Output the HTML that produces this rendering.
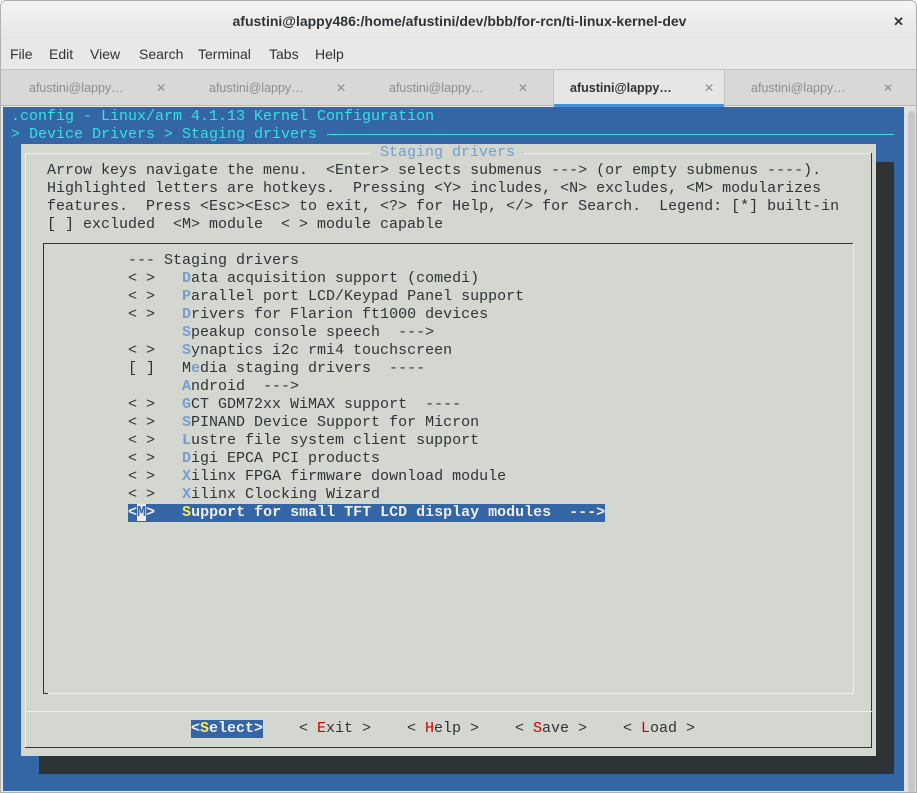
<!DOCTYPE html>
<html><head><meta charset="utf-8"><style>
*{margin:0;padding:0;box-sizing:border-box}
body{width:917px;height:793px;overflow:hidden;background:#fff;font-family:"Liberation Sans",sans-serif;position:relative}
.win{position:absolute;left:0;top:0;width:917px;height:793px;border:1px solid #b0b0b0;border-radius:6px 6px 0 0;background:#e8e8e7;overflow:hidden}
.title{position:absolute;left:0;top:0;width:917px;height:38px;background:linear-gradient(#f4f4f3,#e6e6e5);text-align:center;font-weight:bold;font-size:14px;color:#2e3436;line-height:40px}
.close{position:absolute;right:14px;top:1px;font-size:13px;font-weight:bold;color:#2e3436}
.menu{position:absolute;top:38px;left:0;width:917px;height:30px;background:#e8e8e7;font-size:14px;color:#2e3436}
.menu span{position:absolute;top:7px}
.tabs{position:absolute;top:68px;left:0;width:917px;height:37px;background:#d8d8d7;border-top:1px solid #c4c4c4;border-bottom:1px solid #b8b8b8}
.tab{position:absolute;top:0;height:36px;font-size:12.5px;color:#8d8f8f;line-height:36px}
.tab .x{position:absolute;font-size:12px}
.act{background:#e6e6e5;border-left:1px solid #c4c4c4;border-right:1px solid #c4c4c4;color:#2e3436;font-weight:bold}
.act:after{content:"";position:absolute;left:0;right:0;bottom:-1px;height:3px;background:#4a90d9}
.term{position:absolute;left:2px;top:106px;width:901px;height:684px;background:#3465a4}
.sb{position:absolute;left:903px;top:106px;width:14px;height:687px;background:#e0e0df}
.sb div{position:absolute;left:4px;top:4px;width:7px;height:682px;background:#c8c8c8;border-radius:4px}
.t{position:absolute;font-family:"Liberation Mono",monospace;font-size:15px;line-height:18px;height:18px;white-space:pre;color:#2e3436;margin-left:-1px}
.c{color:#34e2e2}
.h{color:#729fcf;font-weight:bold}
.r{color:#cc0000}
.y{color:#fce94f}
.abs{position:absolute}
</style></head><body><div class="win">
<div class="title">afustini@lappy486:/home/afustini/dev/bbb/for-rcn/ti-linux-kernel-dev<span class="close">✕</span></div>
<div class="menu"><span style="left:9px">File</span><span style="left:48px">Edit</span><span style="left:89px">View</span><span style="left:138px">Search</span><span style="left:197px">Terminal</span><span style="left:268px">Tabs</span><span style="left:314px">Help</span></div>
<div class="tabs">
<div class="tab" style="left:0;width:182px"><span style="position:absolute;left:28px">afustini@lappy…</span><span class="x" style="left:155px">✕</span></div>
<div class="tab" style="left:182px;width:182px"><span style="position:absolute;left:26px">afustini@lappy…</span><span class="x" style="left:153px">✕</span></div>
<div class="tab" style="left:364px;width:188px"><span style="position:absolute;left:24px">afustini@lappy…</span><span class="x" style="left:153px">✕</span></div>
<div class="tab act" style="left:552px;width:172px"><span style="position:absolute;left:16px">afustini@lappy…</span><span class="x" style="left:150px;font-weight:normal;color:#8d8f8f">✕</span></div>
<div class="tab" style="left:724px;width:193px"><span style="position:absolute;left:26px">afustini@lappy…</span><span class="x" style="left:158px">✕</span></div>
</div>
<div class="sb"><div></div></div>
<div class="term"></div>
<div class="t c" style="left:11px;top:107px">.config - Linux/arm 4.1.13 Kernel Configuration</div>
<div class="t c" style="left:11px;top:125px">&gt; Device Drivers &gt; Staging drivers</div>
<div class="abs" style="left:326px;top:133px;width:567px;height:1px;background:#34e2e2"></div>
<div class="abs" style="left:38px;top:755px;width:855px;height:18px;background:#2e3436"></div>
<div class="abs" style="left:875px;top:161px;width:18px;height:612px;background:#2e3436"></div>
<div class="abs" style="left:20px;top:143px;width:855px;height:612px;background:#d3d7cf"></div>
<div class="abs" style="left:24px;top:152px;width:847px;height:1px;background:#eeeeec"></div>
<div class="abs" style="left:24px;top:152px;width:1px;height:594px;background:#eeeeec"></div>
<div class="abs" style="left:870px;top:152px;width:1px;height:594px;background:#2e3436"></div>
<div class="abs" style="left:24px;top:746px;width:847px;height:1px;background:#2e3436"></div>
<div class="abs" style="left:24px;top:710px;width:847px;height:1px;background:#eeeeec"></div>
<div class="t h" style="left:371px;top:143px;background:#d3d7cf;font-weight:normal"> Staging drivers </div>
<div class="t" style="left:38px;top:161px"> Arrow keys navigate the menu.  &lt;Enter&gt; selects submenus ---&gt; (or empty submenus ----).</div>
<div class="t" style="left:38px;top:179px"> Highlighted letters are hotkeys.  Pressing &lt;Y&gt; includes, &lt;N&gt; excludes, &lt;M&gt; modularizes</div>
<div class="t" style="left:38px;top:197px"> features.  Press &lt;Esc&gt;&lt;Esc&gt; to exit, &lt;?&gt; for Help, &lt;/&gt; for Search.  Legend: [*] built-in</div>
<div class="t" style="left:38px;top:215px"> [ ] excluded  &lt;M&gt; module  &lt; &gt; module capable</div>
<div class="abs" style="left:42px;top:242px;width:811px;height:1px;background:#2e3436"></div>
<div class="abs" style="left:42px;top:242px;width:1px;height:451px;background:#2e3436"></div>
<div class="abs" style="left:852px;top:242px;width:1px;height:451px;background:#eeeeec"></div>
<div class="abs" style="left:47px;top:692px;width:806px;height:1px;background:#eeeeec"></div>
<div class="abs" style="left:42px;top:692px;width:5px;height:1px;background:#2e3436"></div>
<div class="t" style="left:128px;top:251px">--- Staging drivers</div>
<div class="t" style="left:128px;top:269px">&lt; &gt;   <span class="h">D</span>ata acquisition support (comedi)</div>
<div class="t" style="left:128px;top:287px">&lt; &gt;   <span class="h">P</span>arallel port LCD/Keypad Panel support</div>
<div class="t" style="left:128px;top:305px">&lt; &gt;   <span class="h">D</span>rivers for Flarion ft1000 devices</div>
<div class="t" style="left:128px;top:323px">      <span class="h">S</span>peakup console speech  ---&gt;</div>
<div class="t" style="left:128px;top:341px">&lt; &gt;   <span class="h">S</span>ynaptics i2c rmi4 touchscreen</div>
<div class="t" style="left:128px;top:359px">[ ]   M<span class="h">e</span>dia staging drivers  ----</div>
<div class="t" style="left:128px;top:377px">      <span class="h">A</span>ndroid  ---&gt;</div>
<div class="t" style="left:128px;top:395px">&lt; &gt;   <span class="h">G</span>CT GDM72xx WiMAX support  ----</div>
<div class="t" style="left:128px;top:413px">&lt; &gt;   <span class="h">S</span>PINAND Device Support for Micron</div>
<div class="t" style="left:128px;top:431px">&lt; &gt;   <span class="h">L</span>ustre file system client support</div>
<div class="t" style="left:128px;top:449px">&lt; &gt;   <span class="h">D</span>igi EPCA PCI products</div>
<div class="t" style="left:128px;top:467px">&lt; &gt;   <span class="h">X</span>ilinx FPGA firmware download module</div>
<div class="t" style="left:128px;top:485px">&lt; &gt;   <span class="h">X</span>ilinx Clocking Wizard</div>
<div class="t" style="left:128px;top:503px;background:#3465a4;color:#eeeeec;font-weight:bold">&lt;<span style="background:#eeeeec;color:#3465a4">M</span>&gt;   <span class="y">S</span>upport for small TFT LCD display modules  ---&gt;</div>
<div class="t" style="left:191px;top:719px;background:#3465a4;color:#eeeeec;font-weight:bold">&lt;<span class="y">S</span>elect&gt;</div>
<div class="t" style="left:299px;top:719px">&lt; <span class="r">E</span>xit &gt;</div>
<div class="t" style="left:407px;top:719px">&lt; <span class="r">H</span>elp &gt;</div>
<div class="t" style="left:515px;top:719px">&lt; <span class="r">S</span>ave &gt;</div>
<div class="t" style="left:623px;top:719px">&lt; <span class="r">L</span>oad &gt;</div>
</div></body></html>
